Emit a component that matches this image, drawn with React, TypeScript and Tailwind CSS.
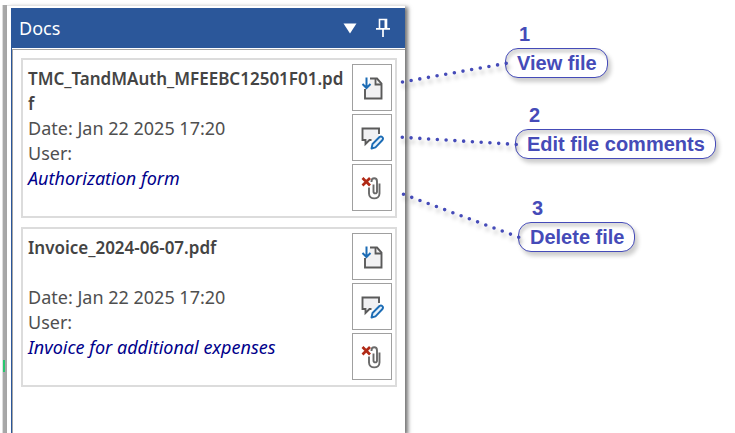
import React from "react";

const docs = [
  {
    name: "TMC_TandMAuth_MFEEBC12501F01.pdf",
    date: "Jan 22 2025 17:20",
    user: "",
    comment: "Authorization form",
  },
  {
    name: "Invoice_2024-06-07.pdf",
    date: "Jan 22 2025 17:20",
    user: "",
    comment: "Invoice for additional expenses",
  },
];

function ViewIcon() {
  return (
    <svg width="22" height="24" viewBox="0 0 22 24" fill="none">
      <path d="M9 2.500h7l4.500 5v15h-17V13L8 10z" fill="#f1f1f3" />
      <path d="M9 2.500h7L20.500 7.500V22.500H4V13" stroke="#5a5a5a" strokeWidth="1.900" />
      <path d="M14.500 2.500v6h6" stroke="#5a5a5a" strokeWidth="1.800" />
      <path d="M5.500 1.500v10.500M1.500 8l4 4 4-4" stroke="#1c6cb5" strokeWidth="2" />
    </svg>
  );
}

function CommentIcon() {
  return (
    <svg width="24" height="24" viewBox="0 0 24 24" fill="none">
      <path d="M2.500 2.500h16.500v9.500L15 14H9l-3.500 4v-4h-3z" fill="#f1f1f3" />
      <path d="M19 8V2.500H2.500V14h3v4L9.500 14h2" stroke="#5a5a5a" strokeWidth="1.900" />
      <path
        d="M11.500 22.500l1-4.500 7-7c2-1.500 4.500.8 3 3l-7 7.300z"
        fill="#e6f1fa"
        stroke="#1c6cb5"
        strokeWidth="1.900"
        strokeLinejoin="round"
      />
    </svg>
  );
}

function DeleteIcon() {
  return (
    <svg width="22" height="24" viewBox="0 0 22 24" fill="none">
      <path
        d="M10.500 6V5.500c0-4.300 5.500-4.300 5.500 0V15.500c0 2.500-3.500 2.500-3.500 0V8.500"
        stroke="#6a6a6a"
        strokeWidth="1.900"
      />
      <path
        d="M8 11.500V17.500c0 6.500 10.500 6.500 10.500 0V7.500"
        stroke="#6a6a6a"
        strokeWidth="1.900"
      />
      <path d="M1.500 2l7.500 7.500M9 2L1.500 9.500" stroke="#b02a16" strokeWidth="2.700" />
    </svg>
  );
}

function PinIcon() {
  return (
    <svg width="16" height="20" viewBox="0 0 16 20" fill="none" stroke="#ffffff">
      <path d="M4.500 10.500V1.500h7v9" strokeWidth="1.600" />
      <path d="M10.500 1.500v9" strokeWidth="2" />
      <path d="M1 10.800h14M8 11v8" strokeWidth="1.700" />
    </svg>
  );
}

const actions = [
  { label: "View file", Icon: ViewIcon },
  { label: "Edit file comments", Icon: CommentIcon },
  { label: "Delete file", Icon: DeleteIcon },
];

function DocCard({ doc }) {
  return (
    <li className="flex border-2 border-[#dcdcdc] pt-1 pr-[3px] pb-[5px] pl-1">
      <div className="min-w-0 flex-1 pt-0.5 pl-px text-lg leading-[25px] text-[#4f4f4f]">
        <h2 className="min-h-[50px] pr-1 text-[17px] leading-[25px] font-semibold break-all text-[#444444]">
          {doc.name}
        </h2>
        <p>Date: {doc.date}</p>
        <p>User: {doc.user}</p>
        <p className="italic text-[#00008b]">{doc.comment}</p>
      </div>
      <div className="flex shrink-0 flex-col gap-[3px]">
        {actions.map(({ label, Icon }) => (
          <button
            key={label}
            type="button"
            aria-label={label}
            className="flex h-[47px] w-10 items-center justify-center border border-[#a0a0a0] bg-white"
          >
            <Icon />
          </button>
        ))}
      </div>
    </li>
  );
}

// Numbered notes placed freely over the canvas beside the panel
function Callout({ number, text, className }) {
  return (
    <div className={`absolute font-bold text-xl text-[#454bb8] ${className}`}>
      <div className="pl-[14px] leading-7">{number}</div>
      <div className="rounded-[13px] border border-[#454bb8] bg-white pr-[10px] pl-[11px] leading-7 whitespace-nowrap shadow-[3px_4px_4px_rgba(0,0,0,0.2),inset_2px_4px_3px_rgba(0,0,0,0.14)]">
        {text}
      </div>
    </div>
  );
}

export default function App() {
  return (
    <div className="relative flex min-h-screen overflow-hidden bg-white font-['Noto_Sans',sans-serif]">
      {/* Edge of the neighbouring pane */}
      <div className="mt-[5px] ml-[2px] flex w-[5px] shrink-0 flex-col border-l border-[#dddddd] bg-[#a9a9a9]">
        <div className="mt-[355px] h-3 w-[2px] bg-[#28c76f]" />
      </div>

      <section className="mt-[5px] w-[398px] shrink-0 border-t border-[#e4e4e4] bg-white pt-[2px] pl-1 shadow-[3px_2px_4px_rgba(0,0,0,0.55)]">
        <div className="flex min-h-full flex-col border-l border-[#2b579a]">
          <header className="flex h-10 items-center bg-[#2b579a] pr-[14px] pl-[7px] text-white">
            <h1 className="flex-1 text-lg">Docs</h1>
            <button type="button" aria-label="Panel menu" className="mr-[18px]">
              <svg width="14" height="11" viewBox="0 0 14 11">
                <path d="M0.500 0.500h13L7 10.500z" fill="#ffffff" />
              </svg>
            </button>
            <button type="button" aria-label="Pin panel">
              <PinIcon />
            </button>
          </header>
          <div className="mt-px flex-1 border-t border-l border-[#a6a6a6] pt-2 pr-2 pl-2">
            <ul className="flex flex-col gap-[9px]">
              {docs.map((doc) => (
                <DocCard key={doc.name} doc={doc} />
              ))}
            </ul>
          </div>
        </div>
      </section>

      <div className="font-['Liberation_Sans',sans-serif]">
        <Callout number="1" text="View file" className="top-5 left-[505px]" />
        <Callout number="2" text="Edit file comments" className="top-[101px] left-[515px]" />
        <Callout number="3" text="Delete file" className="top-[194px] left-[518px]" />
      </div>

      <svg
        className="pointer-events-none absolute top-0 left-0 drop-shadow-[2px_4px_2px_rgba(0,0,0,0.3)]"
        width="735"
        height="260"
        viewBox="0 0 735 260"
        stroke="#454bb8"
        strokeWidth="3.600"
        strokeLinecap="round"
        strokeDasharray="0 8.780"
      >
        <path d="M402.500 82L506.500 63.300" />
        <path d="M402.300 137.300L517 144.500" />
        <path d="M403.500 194.300L519 237.300" />
      </svg>
    </div>
  );
}
